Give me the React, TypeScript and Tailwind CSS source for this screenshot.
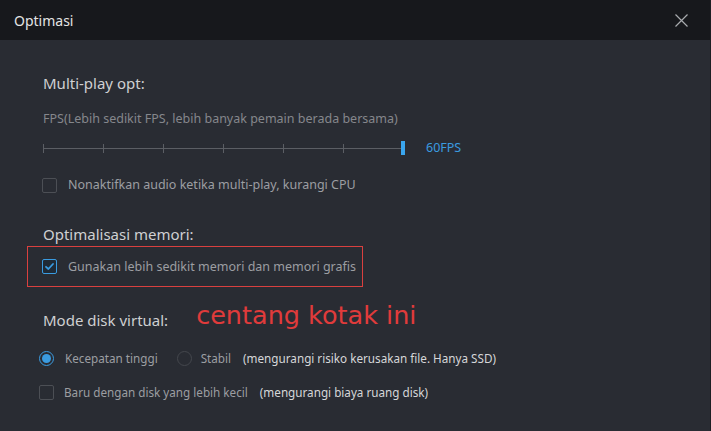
import React from 'react';

const font = { fontFamily: '"Noto Sans", "Open Sans", sans-serif' };

function Checkbox({ checked }: { checked?: boolean }) {
    return (
        <span
            className={`flex h-[15px] w-[15px] shrink-0 items-center justify-center rounded-[2px] border ${checked ? 'border-[#3a9be0] bg-[#1f2a36]' : 'border-[#4c4f55]'}`}
        >
            {checked && (
                <svg width="11" height="11" viewBox="0 0 11 11" fill="none">
                    <path d="M2 5.8 L4.4 8 L9 3" stroke="#3a9be0" strokeWidth="1.8" strokeLinecap="round" strokeLinejoin="round" />
                </svg>
            )}
        </span>
    );
}

function Radio({ checked }: { checked?: boolean }) {
    return (
        <span
            className={`flex h-[15px] w-[15px] shrink-0 items-center justify-center rounded-full border ${checked ? 'border-[#3a9be0]' : 'border-[#44474d]'}`}
        >
            {checked && <span className="h-[9px] w-[9px] rounded-full bg-[#3a9be0]" />}
        </span>
    );
}

export default function App() {
    const ticks = [0, 1, 2, 3, 4, 5];

    return (
        <div className="flex h-[431px] w-[711px] flex-col overflow-hidden bg-[#292c33] border-r border-[#1d1f24]" style={font}>
            <header className="flex h-[40px] shrink-0 items-center justify-between bg-[#17181c] pl-[14px] pr-[22px]">
                <span className="text-[14px] text-[#e4e4e4]">Optimasi</span>
                <svg width="13" height="13" viewBox="0 0 13 13">
                    <path d="M0.5 0.5 L12.5 12.5 M12.5 0.5 L0.5 12.5" stroke="#a9abaf" strokeWidth="1.2" />
                </svg>
            </header>

            <main className="flex flex-col pl-[43px] pt-[33px]">
                <h2 className="text-[15px] leading-[20px] text-[#cfd0d2]">Multi-play opt:</h2>

                <p className="mt-[18px] text-[12.5px] leading-[16px] text-[#85878c]">
                    FPS(Lebih sedikit FPS, lebih banyak pemain berada bersama)
                </p>

                <div className="mt-[13px] flex h-[16px] items-center">
                    <div className="relative flex h-[16px] w-[362px] items-center">
                        <div className="h-px w-[358px] bg-[#5b5e64]" />
                        {ticks.map((t) => (
                            <span
                                key={t}
                                className="absolute top-[4px] h-[9px] w-px bg-[#5b5e64]"
                                style={{ left: t * 60 }}
                            />
                        ))}
                        <span className="absolute left-[358px] top-[1px] h-[14px] w-[4px] bg-[#3aa6ef]" />
                    </div>
                    <span className="ml-[21px] text-[12.5px] text-[#3a9be0]">60FPS</span>
                </div>

                <label className="mt-[21px] -ml-px flex items-center gap-[11px] text-[12.5px] leading-[16px] text-[#9c9ea2]">
                    <Checkbox />
                    <span>Nonaktifkan audio ketika multi-play, kurangi CPU</span>
                </label>

                <h2 className="mt-[31px] text-[15px] leading-[20px] text-[#cfd0d2]">Optimalisasi memori:</h2>

                <div className="-ml-[16px] mt-[2px] flex h-[41px] w-[336px] items-center shadow-[inset_0_0_0_1px_#d9403f] pl-[15px]">
                    <label className="flex items-center gap-[11px] text-[12.5px] leading-[16px] text-[#9c9ea2]">
                        <Checkbox checked />
                        <span>Gunakan lebih sedikit memori dan memori grafis</span>
                    </label>
                </div>

                <div className="mt-[7px] flex h-[40px] items-end">
                    <h2 className="pb-[4px] text-[15px] leading-[20px] text-[#cfd0d2]">Mode disk virtual:</h2>
                    <span
                        className="mb-[4px] ml-[28px] text-[25.5px] leading-[30px] text-[#e03b3b]"
                        style={{ fontFamily: '"DejaVu Sans", Verdana, sans-serif' }}
                    >
                        centang kotak ini
                    </span>
                </div>

                <div className="-ml-[4px] mt-[16px] flex h-[16px] items-center text-[11.7px] leading-[16px]">
                    <Radio checked />
                    <span className="ml-[11px] text-[#9c9ea2]">Kecepatan tinggi</span>
                    <span className="ml-[19px]"><Radio /></span>
                    <span className="ml-[9px] text-[#9c9ea2]">Stabil</span>
                    <span className="ml-[12px] text-[#d6d7d9]">(mengurangi risiko kerusakan file. Hanya SSD)</span>
                </div>

                <div className="-ml-[4px] mt-[18px] flex h-[16px] items-center text-[11.7px] leading-[16px]">
                    <Checkbox />
                    <span className="ml-[10px] text-[#9c9ea2]">Baru dengan disk yang lebih kecil</span>
                    <span className="ml-[12px] text-[#d6d7d9]">(mengurangi biaya ruang disk)</span>
                </div>
            </main>
        </div>
    );
}
